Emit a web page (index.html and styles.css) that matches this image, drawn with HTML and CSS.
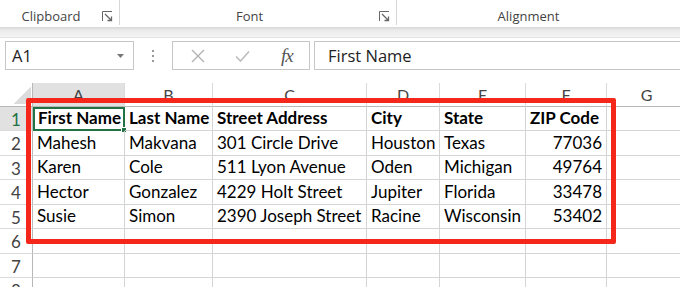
FILE: index.html
```html
<!DOCTYPE html>
<html lang="en">

<head>
  <meta charset="UTF-8" />
  <meta name="viewport" content="width=device-width, initial-scale=1.0" />
  <title>Address List - Excel</title>
  <link rel="stylesheet" href="styles.css">
</head>

<body>
  <!-- ribbon group captions -->
  <div class="ribbon">
    <div class="group clipboard">
      <span class="group-label">Clipboard</span>
      <svg class="launcher" width="11" height="11" viewBox="0 0 11 11">
        <path d="M0.5 10V0.5H10" fill="none" stroke="#666" />
        <path d="M3 3L9.5 9.5M5.5 9.5H9.5V5.5" fill="none" stroke="#666" stroke-width="1.3" />
      </svg>
    </div>
    <div class="group font">
      <span class="group-label">Font</span>
      <svg class="launcher" width="11" height="11" viewBox="0 0 11 11">
        <path d="M0.5 10V0.5H10" fill="none" stroke="#666" />
        <path d="M3 3L9.5 9.5M5.5 9.5H9.5V5.5" fill="none" stroke="#666" stroke-width="1.3" />
      </svg>
    </div>
    <div class="group alignment">
      <span class="group-label">Alignment</span>
    </div>
  </div>
  <div class="ribbon-shadow"></div>

  <!-- name box + formula bar -->
  <div class="formula-bar">
    <div class="name-box">
      <span>A1</span>
      <svg width="7" height="4" viewBox="0 0 7 4">
        <path d="M0 0H7L3.5 4Z" fill="#777" />
      </svg>
    </div>
    <div class="grip">
      <i></i><i></i><i></i>
    </div>
    <div class="fx-buttons">
      <span class="fx-btn">
        <svg width="14" height="14" viewBox="0 0 14 14">
          <path d="M1 1L13 13M13 1L1 13" stroke="#b3b3b3" stroke-width="1.4" />
        </svg>
      </span>
      <span class="fx-btn">
        <svg width="15" height="12" viewBox="0 0 15 12">
          <path d="M1 6.5L5.5 11L14 1.5" fill="none" stroke="#bcbcbc" stroke-width="1.6" />
        </svg>
      </span>
      <span class="fx-btn fx">fx</span>
    </div>
    <div class="formula-input">First Name</div>
  </div>

  <!-- worksheet -->
  <div class="sheet">
    <div class="grid">
      <div class="hd corner"><span class="corner-mark"></span></div>
      <div class="hd col active">A</div>
      <div class="hd col">B</div>
      <div class="hd col">C</div>
      <div class="hd col">D</div>
      <div class="hd col">E</div>
      <div class="hd col">F</div>
      <div class="hd col">G</div>

      <div class="hd row active">1</div>
      <div class="cell bold selected">First Name<span class="fill-handle"></span></div>
      <div class="cell bold">Last Name</div>
      <div class="cell bold">Street Address</div>
      <div class="cell bold">City</div>
      <div class="cell bold">State</div>
      <div class="cell bold">ZIP Code</div>
      <div class="cell"></div>

      <div class="hd row">2</div>
      <div class="cell">Mahesh</div>
      <div class="cell">Makvana</div>
      <div class="cell">301 Circle Drive</div>
      <div class="cell">Houston</div>
      <div class="cell">Texas</div>
      <div class="cell num">77036</div>
      <div class="cell"></div>

      <div class="hd row">3</div>
      <div class="cell">Karen</div>
      <div class="cell">Cole</div>
      <div class="cell">511 Lyon Avenue</div>
      <div class="cell">Oden</div>
      <div class="cell">Michigan</div>
      <div class="cell num">49764</div>
      <div class="cell"></div>

      <div class="hd row">4</div>
      <div class="cell">Hector</div>
      <div class="cell">Gonzalez</div>
      <div class="cell">4229 Holt Street</div>
      <div class="cell">Jupiter</div>
      <div class="cell">Florida</div>
      <div class="cell num">33478</div>
      <div class="cell"></div>

      <div class="hd row">5</div>
      <div class="cell">Susie</div>
      <div class="cell">Simon</div>
      <div class="cell">2390 Joseph Street</div>
      <div class="cell">Racine</div>
      <div class="cell">Wisconsin</div>
      <div class="cell num">53402</div>
      <div class="cell"></div>

      <div class="hd row">6</div>
      <div class="cell"></div><div class="cell"></div><div class="cell"></div><div class="cell"></div>
      <div class="cell"></div><div class="cell"></div><div class="cell"></div>

      <div class="hd row">7</div>
      <div class="cell"></div><div class="cell"></div><div class="cell"></div><div class="cell"></div>
      <div class="cell"></div><div class="cell"></div><div class="cell"></div>

      <div class="hd row">8</div>
      <div class="cell"></div><div class="cell"></div><div class="cell"></div><div class="cell"></div>
      <div class="cell"></div><div class="cell"></div><div class="cell"></div>
    </div>

    <!-- red box drawn around the data range -->
    <div class="range-mark"></div>
  </div>
</body>

</html>
```

FILE: styles.css
```css
* {
  margin: 0;
  padding: 0;
  box-sizing: border-box;
}

body {
  background: #fff;
  width: 680px;
  height: 287px;
  overflow: hidden;
  font-family: 'Open Sans', 'Noto Sans', sans-serif;
}

/* Ribbon captions */
.ribbon {
  height: 27px;
  display: flex;
  align-items: flex-start;
}

.group {
  height: 25px;
  display: flex;
  align-items: flex-end;
  border-right: 1px solid #d6d6d6;
}

.clipboard {
  width: 120px;
}

.font {
  width: 277px;
}

.alignment {
  width: 263px;
  border-right: none;
}

.group-label {
  flex: 1;
  text-align: center;
  font-size: 13px;
  line-height: 17px;
  color: #444;
}

.launcher {
  margin: 0 6px 3px 0;
}

.ribbon-shadow {
  height: 11px;
  background: linear-gradient(#d8d8d8, #ebebeb 35%, #f4f4f4);
  border-bottom: 1px solid #e4e4e4;
}

/* Formula bar */
.formula-bar {
  margin-top: 3px;
  height: 29px;
  display: flex;
}

.name-box {
  margin-left: 5px;
  width: 129px;
  border: 1px solid #c6c6c6;
  display: flex;
  align-items: center;
  justify-content: space-between;
  padding: 0 9px 0 6px;
  font-size: 16.5px;
  color: #222;
}

.grip {
  width: 38px;
  display: flex;
  flex-direction: column;
  align-items: center;
  justify-content: center;
  gap: 3px;
}

.grip i {
  width: 2px;
  height: 2px;
  background: #999;
}

.fx-buttons {
  width: 138px;
  border: 1px solid #c6c6c6;
  display: flex;
  align-items: center;
  padding-left: 3px;
}

.fx-btn {
  width: 45px;
  display: flex;
  justify-content: center;
  align-items: center;
}

.fx {
  font-family: 'Liberation Serif', serif;
  font-style: italic;
  font-size: 19px;
  color: #555;
  letter-spacing: -1px;
}

.formula-input {
  margin-left: 4px;
  flex: 1;
  border: 1px solid #c6c6c6;
  border-right: none;
  padding-left: 13px;
  display: flex;
  align-items: center;
  font-size: 16.5px;
  color: #222;
}

/* Worksheet grid */
.sheet {
  position: relative;
  margin-top: 13px;
}

.grid {
  display: grid;
  grid-template-columns: 33px 92px 88px 154px 73px 86px 81px 80px;
  grid-template-rows: 23.5px repeat(8, 24.5px);
  font-family: Lato, 'Open Sans', sans-serif;
}

.hd {
  color: #444;
  font-size: 16px;
  display: flex;
  align-items: center;
  justify-content: center;
  border-right: 1px solid #dadada;
  border-bottom: 1px solid #dadada;
}

.hd.col {
  border-bottom-color: #b8b8b8;
}

.hd.row {
  border-right-color: #b8b8b8;
  font-size: 17px;
  padding-top: 2px;
}

.hd.active {
  background: #e1e1e1;
}

.hd.row.active {
  color: #217346;
}

.corner {
  justify-content: flex-end;
  align-items: flex-end;
  padding: 0 1px 2px 0;
  border-right-color: #b8b8b8;
  border-bottom-color: #b8b8b8;
}

.corner-mark {
  width: 17px;
  height: 17px;
  background: linear-gradient(to bottom right, transparent 50%, #dcdcdc 50%);
}

.cell {
  position: relative;
  display: flex;
  align-items: flex-end;
  padding: 0 4px 3px 4px;
  font-size: 17px;
  line-height: 18px;
  color: #000;
  white-space: nowrap;
  border-right: 1px solid #d4d4d4;
  border-bottom: 1px solid #d4d4d4;
}

.cell.bold {
  font-weight: 700;
}

.cell.num {
  justify-content: flex-end;
}

.cell.selected {
  border: 2px solid #217346;
  padding: 0 3px 2px 3px;
}

.fill-handle {
  position: absolute;
  right: -4px;
  bottom: -4px;
  width: 6px;
  height: 6px;
  background: #217346;
  border: 1px solid #fff;
}

.range-mark {
  position: absolute;
  left: 26px;
  top: 15px;
  width: 590px;
  height: 146px;
  border: 5px solid #f5271a;
  border-radius: 2px;
}
```
